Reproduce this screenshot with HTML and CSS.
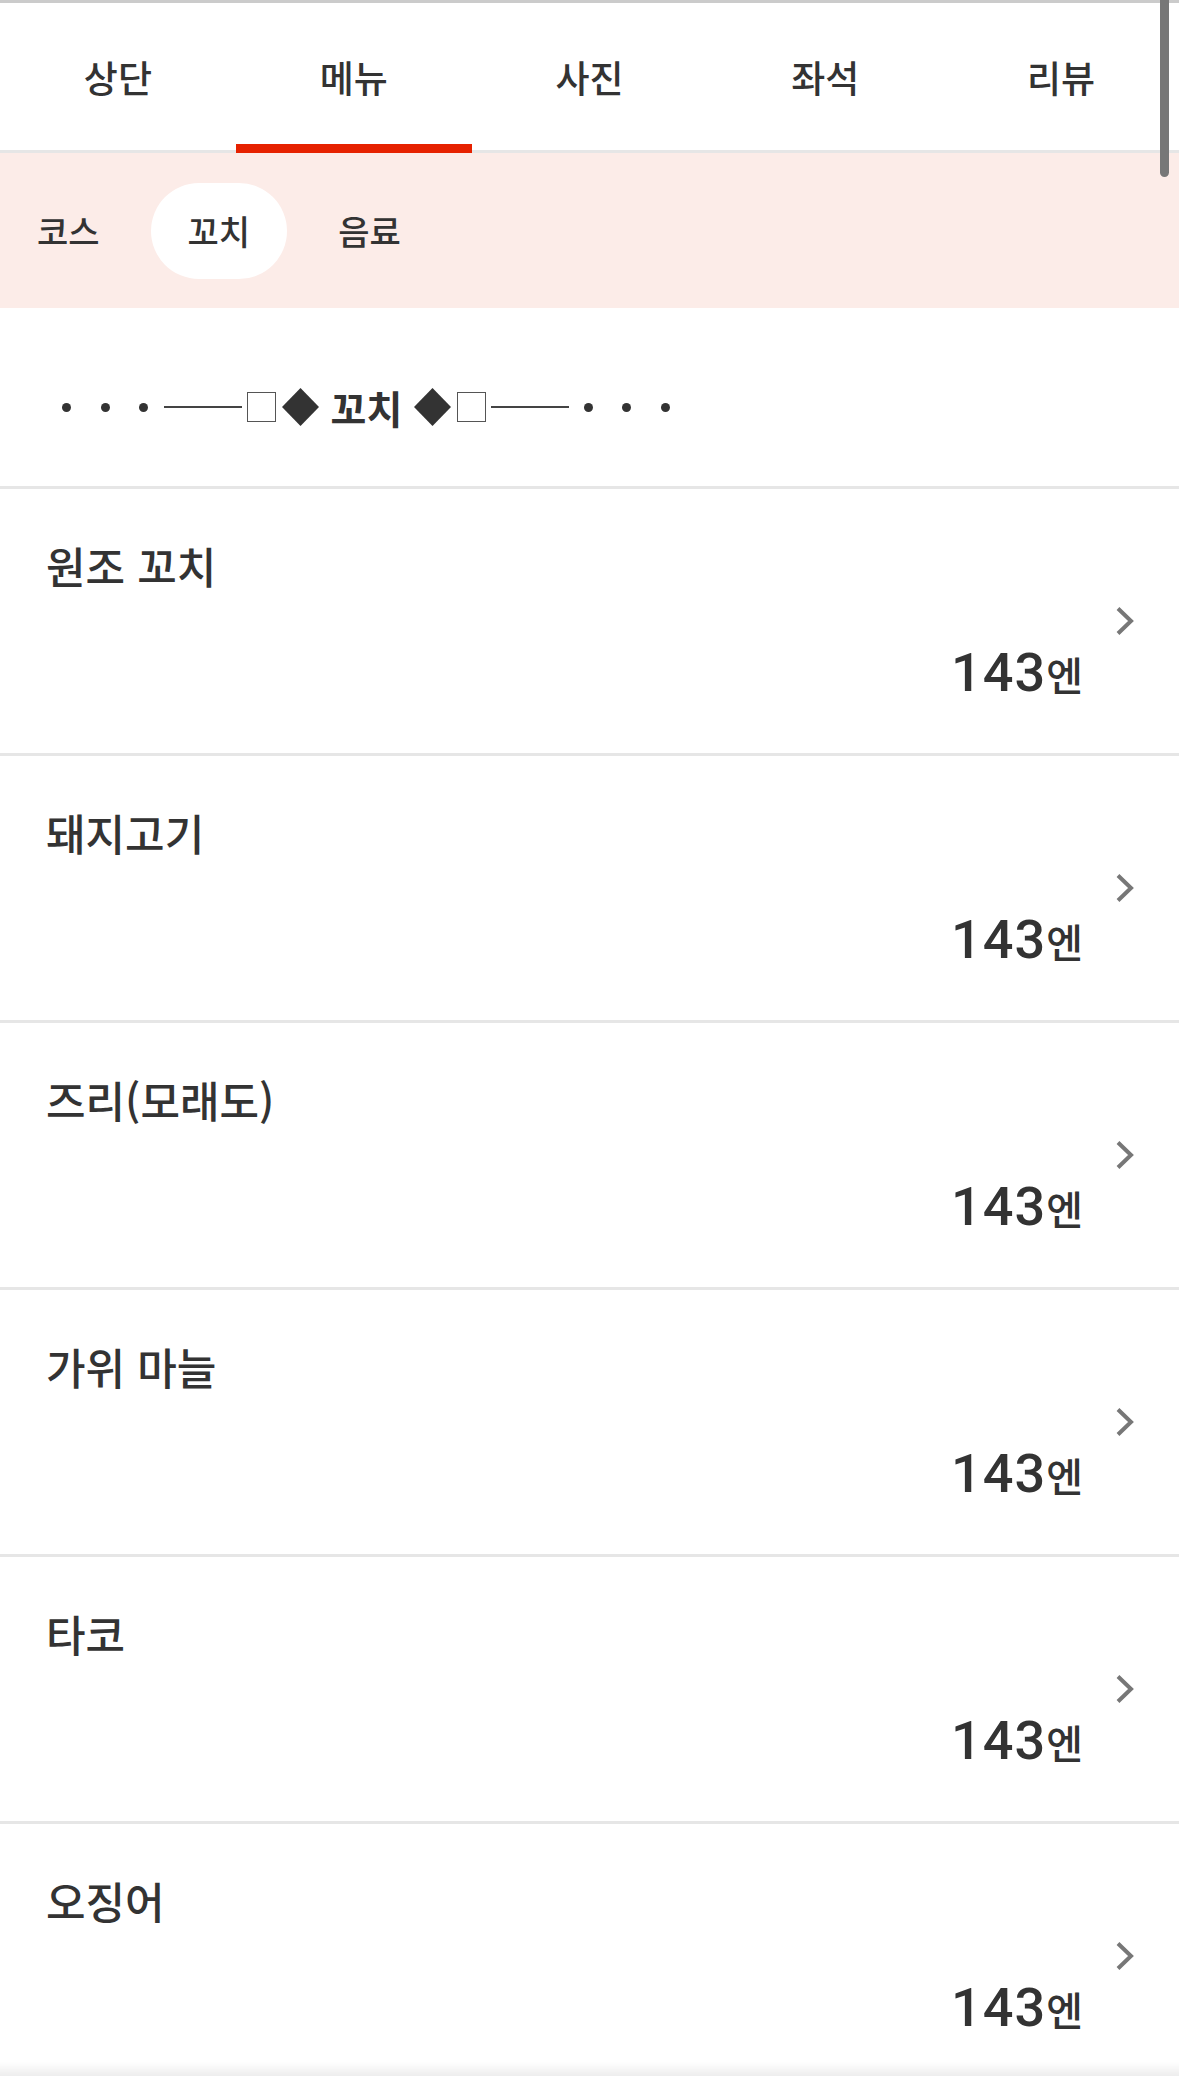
FILE: index.html
```html
<!DOCTYPE html>
<html lang="ko">
<head>
  <meta charset="UTF-8" />
  <meta name="viewport" content="width=device-width, initial-scale=1" />
  <title>메뉴 • 꼬치</title>
  <link rel="stylesheet" href="styles.css">
</head>
<body>

  <!-- Верхние вкладки -->
  <nav class="tabs">
    <a class="tab" href="#">상단</a>
    <a class="tab active" href="#">메뉴</a>
    <a class="tab" href="#">사진</a>
    <a class="tab" href="#">좌석</a>
    <a class="tab" href="#">리뷰</a>
  </nav>

  <!-- Категории меню -->
  <div class="subnav">
    <a class="chip" href="#">코스</a>
    <a class="chip active" href="#">꼬치</a>
    <a class="chip" href="#">음료</a>
  </div>

  <section class="menu">
    <h2 class="menu-heading">
      <span class="dots"><i></i><i></i><i></i></span>
      <span class="rule"></span>
      <span class="box"></span>
      <svg class="diamond" width="37" height="38" viewBox="0 0 37 38"><polygon points="18.5,0 37,19 18.5,38 0,19"/></svg>
      <span class="heading-text">꼬치</span>
      <svg class="diamond" width="37" height="38" viewBox="0 0 37 38"><polygon points="18.5,0 37,19 18.5,38 0,19"/></svg>
      <span class="box"></span>
      <span class="rule"></span>
      <span class="dots"><i></i><i></i><i></i></span>
    </h2>

    <ul class="menu-list">
      <li class="menu-item">
        <div class="item-body">
          <div class="item-name">원조 꼬치</div>
          <div class="item-price">143<span class="yen">엔</span></div>
        </div>
        <svg class="chevron" width="18" height="28" viewBox="0 0 18 28"><polyline points="2,1.5 15,14 2,26.5"/></svg>
      </li>
      <li class="menu-item">
        <div class="item-body">
          <div class="item-name">돼지고기</div>
          <div class="item-price">143<span class="yen">엔</span></div>
        </div>
        <svg class="chevron" width="18" height="28" viewBox="0 0 18 28"><polyline points="2,1.5 15,14 2,26.5"/></svg>
      </li>
      <li class="menu-item">
        <div class="item-body">
          <div class="item-name">즈리(모래도)</div>
          <div class="item-price">143<span class="yen">엔</span></div>
        </div>
        <svg class="chevron" width="18" height="28" viewBox="0 0 18 28"><polyline points="2,1.5 15,14 2,26.5"/></svg>
      </li>
      <li class="menu-item">
        <div class="item-body">
          <div class="item-name">가위 마늘</div>
          <div class="item-price">143<span class="yen">엔</span></div>
        </div>
        <svg class="chevron" width="18" height="28" viewBox="0 0 18 28"><polyline points="2,1.5 15,14 2,26.5"/></svg>
      </li>
      <li class="menu-item">
        <div class="item-body">
          <div class="item-name">타코</div>
          <div class="item-price">143<span class="yen">엔</span></div>
        </div>
        <svg class="chevron" width="18" height="28" viewBox="0 0 18 28"><polyline points="2,1.5 15,14 2,26.5"/></svg>
      </li>
      <li class="menu-item">
        <div class="item-body">
          <div class="item-name">오징어</div>
          <div class="item-price">143<span class="yen">엔</span></div>
        </div>
        <svg class="chevron" width="18" height="28" viewBox="0 0 18 28"><polyline points="2,1.5 15,14 2,26.5"/></svg>
      </li>
    </ul>
  </section>

  <!-- Полоса прокрутки и тень снизу -->
  <div class="scroll-thumb"></div>
  <div class="bottom-shade"></div>

</body>
</html>
```

FILE: styles.css
```css
/* --- Переменные и сброс --- */
:root {
  --text: #333;
  --red: #e62100;
  --line: #e6e6e6;
  --pink-bg: #fcece8;
  --chevron: #777;
}
* {
  margin: 0;
  padding: 0;
  box-sizing: border-box;
}
body {
  font-family: "Noto Sans CJK KR", "Noto Sans", sans-serif;
  color: var(--text);
  background: #fff;
  overflow: hidden;
}
a {
  color: inherit;
  text-decoration: none;
}

/* --- Вкладки --- */
.tabs {
  display: flex;
  border-top: 3px solid #cbcbcb;
  border-bottom: 3px solid var(--line);
  height: 153px;
}
.tab {
  flex: 1;
  position: relative;
  display: flex;
  align-items: center;
  justify-content: center;
  font-size: 37px;
  font-weight: 500;
}
.tab.active::after {
  content: "";
  position: absolute;
  left: 0;
  right: 0;
  bottom: -3px;
  height: 9px;
  background: var(--red);
}

/* --- Категории --- */
.subnav {
  display: flex;
  align-items: center;
  gap: 14px;
  height: 155px;
  background: var(--pink-bg);
}
.chip {
  height: 96px;
  padding: 0 37px;
  border-radius: 48px;
  display: flex;
  align-items: center;
  font-size: 34px;
  font-weight: 500;
}
.chip.active {
  background: #fff;
}

/* --- Заголовок раздела --- */
.menu-heading {
  display: flex;
  align-items: center;
  height: 181px;
  padding: 77px 0 57px 62px;
  border-bottom: 3px solid var(--line);
  font-size: 39px;
  font-weight: 700;
  line-height: 44px;
}
.dots {
  display: flex;
  gap: 29.5px;
}
.dots i {
  width: 9px;
  height: 9px;
  border-radius: 50%;
  background: var(--text);
}
.rule {
  width: 78px;
  height: 1.5px;
  background: #444;
  margin: 0 5px 0 15.5px;
}
.box {
  width: 29px;
  height: 30px;
  border: 1.5px solid #555;
  margin-right: 6px;
}
.diamond {
  fill: var(--text);
  display: block;
}
.heading-text {
  margin: 0 12px 0 12px;
}
/* правая половина — зеркально */
.heading-text ~ .diamond {
  margin-right: 6px;
}
.heading-text ~ .box {
  margin-right: 0;
}
.heading-text ~ .rule {
  margin: 0 14.5px 0 5px;
}

/* --- Список блюд --- */
.menu-list {
  list-style: none;
}
.menu-item {
  display: flex;
  align-items: center;
  gap: 33px;
  padding: 49px 45px 50px 46px;
  border-bottom: 3px solid var(--line);
}
.item-body {
  flex: 1;
  display: flex;
  flex-direction: column;
}
.item-name {
  font-size: 43px;
  font-weight: 500;
  line-height: 54px;
}
.item-price {
  align-self: flex-end;
  margin-top: 51px;
  font-family: "Roboto", "Noto Sans CJK KR", sans-serif;
  font-size: 54px;
  font-weight: 500;
  line-height: 60px;
  height: 60px;
  letter-spacing: 1px;
}
.yen {
  font-family: "Noto Sans CJK KR", sans-serif;
  font-size: 40px;
  line-height: 1;
  letter-spacing: 0;
}
.chevron {
  flex: none;
  display: block;
  fill: none;
  stroke: var(--chevron);
  stroke-width: 4;
}

/* --- Полоса прокрутки и тень --- */
.scroll-thumb {
  position: fixed;
  top: 0;
  right: 10px;
  width: 9px;
  height: 177px;
  border-radius: 0 0 5px 5px;
  background: #777;
}
.bottom-shade {
  position: fixed;
  left: 0;
  right: 0;
  bottom: 0;
  height: 14px;
  background: linear-gradient(rgba(0,0,0,0), rgba(0,0,0,0.07));
  pointer-events: none;
}
```
